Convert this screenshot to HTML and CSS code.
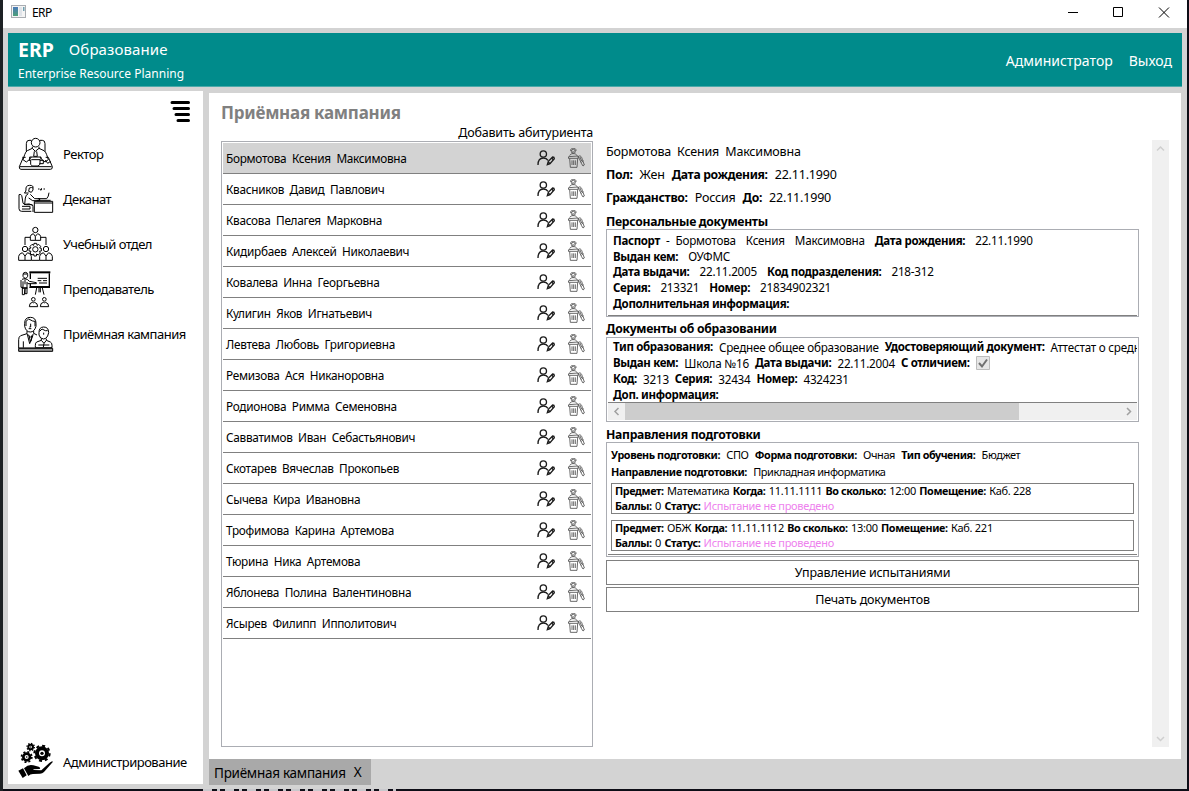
FILE: index.html
```html
<!DOCTYPE html>
<html lang="ru">
<head>
<meta charset="utf-8">
<title>ERP</title>
<link rel="stylesheet" href="styles.css">
</head>
<body>
<svg class="defs" aria-hidden="true">
  <symbol id="edit" viewBox="0 0 54 48">
    <g fill="none" stroke="#1c1c1c" stroke-width="4"><circle cx="19" cy="12" r="9.5"/><path d="M3 45C3 31 9 24 19 24c7 0 11 2 14 7"/><path d="M31 44l3-10 13-13q5 0 5 5L39 41z"/><path d="M34 36l5 5M44 24l5 5"/></g>
  </symbol>
  <symbol id="del" viewBox="0 0 51 60">
    <g fill="none" stroke="#444" stroke-width="2.4"><circle cx="16" cy="10" r="6"/><path d="M8 9C7 2 12 1 16 1s9 1 8 8M5 23c2-5 6-6 11-6s9 1 11 6M1 31l1-5 28-2 1 7zM5 32l2 26h20l2-26M12 37v14M17 37v14M22 37v14"/><path d="M31 25c7-4 10 2 12 9l6 17-4 3-5-8-6-14z"/><path d="M36 27l5 12M40 43l6-5M12 11l3 2 5-4"/></g>
  </symbol>
</svg>
<div class="desktop">
<div class="window">
  <div class="titlebar">
    <svg class="app-icon" width="15" height="13" viewBox="0 0 15 13"><defs><linearGradient id="g" x2="0" y2="1"><stop stop-color="#4a79b8"/><stop offset="1" stop-color="#4c9f78"/></linearGradient></defs><rect x=".5" y=".5" width="14" height="12" fill="#f4f4f4" stroke="#a9adb2"/><path d="M2 2h5v9H2z" fill="url(#g)"/><path d="M8 2h3v9H8z" fill="#dfe3e8"/><path d="M12 2h1.5v4H12z" fill="#6f9fb0"/></svg>
    <span class="app-title">ERP</span>
    <svg class="win-btns" width="110" height="24" viewBox="0 0 110 24" fill="none" stroke="#000"><path d="M5 12.500h10M50.500 7.500h9v9h-9zM96 7.500l10 10M106 7.500l-10 10"/></svg>
  </div>
  <div class="header">
    <div class="brand">
      <div class="brand-top"><b class="logo">ERP</b><span class="product">Образование</span></div>
      <div class="tagline">Enterprise Resource Planning</div>
    </div>
    <div class="user"><span>Администратор</span><span>Выход</span></div>
  </div>
  <div class="main">
    <div class="sidebar">
      <svg class="burger" width="20" height="23" viewBox="0 0 20 23" stroke="#000" stroke-width="3" stroke-linecap="round"><path d="M2 2.500h16.500M4 8.500h14.500M6 14.500h12.500M8 20.500h10.500"/></svg>
      <div class="nav">
        <div class="item"><svg class="ico" viewBox="0 0 108 108"><circle cx="53" cy="17" r="13"/><path d="M40 10h-7q-8 0-8 10v24M66 10h7q8 0 8 10v24"/><path d="M43 29v5l-15 7q-5 3-8 12l-5 15 10 7 9-7 6-8M63 29v5l15 7q5 3 8 12l5 15-10 7-9-7-6-8M43 34l9 9 11-9M49 43l-2 15h11l-2-15"/><path d="M40 68h26v14l-6 5H43l-5-5V68M66 70h10v10H64M35 60h34v8M35 60v12"/><path d="M16 61l-12 28q-1 8 5 8h88q7 0 6-8l-12-28M5 89h96M13 61h10M83 61h8M82 69l7 10 9-6"/></svg><span>Ректор</span></div>
        <div class="item"><svg class="ico" viewBox="0 0 108 108"><path d="M24 24q-2-14 11-14 12 0 10 8-4-3-11 0l-2 10 8 3 5-7v-6M24 24q-1 7-5 9h13M30 36q-6 1-8 12l-2 19M37 37l13 13h15v6H44l-12-8"/><path d="M3 38q8-3 9 7l3 18q1 5 10 5h16q4 0 4 6v16M3 38v42q0 8 8 8h29M20 67q15-4 24 3M12 73h24v8H12"/><path d="M49 58h55v33H49zM49 63h55M56 55h42M60 50h26q6-6 7-18M66 54l-4-3"/><path d="M61 21h3M69 21h3M77 21h3M67 22l3 3" stroke-width="4"/></svg><span>Деканат</span></div>
        <div class="item"><svg class="ico" viewBox="0 0 108 108"><circle cx="52" cy="9" r="8"/><path d="M37 40V29q0-6 9-9l6 8 7-8q9 3 9 9v11zM52 28v11M37 31H21v23M68 31h16v23"/><circle cx="21" cy="66" r="8"/><circle cx="84" cy="66" r="8"/><path d="M2 100V88q0-7 11-11l8 10 8-10q11 4 11 11v12zM65 100V88q0-7 11-11l8 10 8-10q11 4 11 11v12zM21 87v12M84 87v12M40 100h25"/><circle cx="52" cy="67" r="8"/><path d="M48 49h8l1 6 5-3 6 6-3 5 5 1v8l-6 1 3 5-6 6-5-3-1 6h-7l-1-6-5 3-6-6 3-5-6-1v-8l6-1-3-5 6-6 5 3z"/></svg><span>Учебный отдел</span></div>
        <div class="item"><svg class="ico" viewBox="0 0 108 108"><path d="M34 1h63" stroke-width="6"/><path d="M37 4v17M37 34v10h57V4M34 46h62" stroke-width="4"/><path d="M59 19h28M59 26h11M75 26h12M63 33h24"/><path d="M15 8q0-7 7-7t7 7v5q-3 6-7 6t-7-6zM15 6h13"/><path d="M12 22q9-5 17 1l5 5 21 4v3H30l-3-4v34h-6V49M21 49l-2 19h-6V46M9 24v22h6V28M21 22v15"/><path d="M12 48h16" stroke-width="5"/><path d="M56 48l-4 20M63 48v13M73 48l5 20M67 48v13"/><circle cx="46" cy="82" r="5.500"/><circle cx="79" cy="82" r="5.500"/><path d="M34 104q0-12 9-13 4 3 7 0 9 2 9 13zM67 104q0-12 9-13 4 3 7 0 9 2 9 13z"/></svg><span>Преподаватель</span></div>
        <div class="item"><svg class="ico" viewBox="0 0 108 108"><path d="M20 19Q20 1 37 1t17 18v9q-5 17-17 17-13 0-17-17zM24 27V13l8-7 12 6 7 1v15M38 20v10h-4M32 35h8"/><path d="M27 42v8L8 56q-6 3-6 12v25h50M47 42v7l10 5M27 50l11 11 9-11M33 56l4 17M42 56l-3 17M16 73v19M28 52l7 28 10-25"/><path d="M63 47q0-17 14-17 15 0 15 17l-3 10q-5 9-12 9-11 0-14-12zM65 43l7-7 10 5 7 0M77 47v6"/><path d="M70 65v5l-14 5q-4 2-4 10v7h50V85q0-8-5-10l-12-5v-5M70 70l8 9 7-9M78 79l-2 12M61 84h33"/><path d="M2 94h102v9H2z" fill="#999"/></svg><span>Приёмная кампания</span></div>
      </div>
      <div class="item bottom"><svg class="ico solid" viewBox="0 0 108 108"><g fill="none" stroke="#000"><circle cx="38" cy="9" r="7" stroke-width="6"/><circle cx="38" cy="9" r="11" stroke-width="4" stroke-dasharray="4 4.600"/><circle cx="26" cy="39" r="10" stroke-width="8"/><circle cx="26" cy="39" r="15.500" stroke-width="5" stroke-dasharray="6 6.200"/><circle cx="72" cy="28" r="15" stroke-width="12"/><circle cx="72" cy="28" r="23" stroke-width="6" stroke-dasharray="9 9"/></g><circle cx="38" cy="9" r="2"/><circle cx="26" cy="39" r="2.500"/><circle cx="72" cy="28" r="5"/><path d="M1 80l14-7 11 21-12 8zM18 73q14-14 28-9l16 4q7 3 3 7l-19 1 1 2 23 1 24-22q6-4 9-5 3 1-2 6L78 84q-5 5-12 5l-21 1q-9 0-14 6z"/></svg><span>Администрирование</span></div>
    </div>
    <div class="workspace">
      <div class="content">
        <div class="left">
          <h1 class="title">Приёмная кампания</h1>
          <div class="add">Добавить абитуриента</div>
          <div class="list">
            <div class="row selected"><span>Бормотова  Ксения  Максимовна</span><svg class="e"><use href="#edit"/></svg><svg class="d"><use href="#del"/></svg></div>
            <div class="row"><span>Квасников  Давид  Павлович</span><svg class="e"><use href="#edit"/></svg><svg class="d"><use href="#del"/></svg></div>
            <div class="row"><span>Квасова  Пелагея  Марковна</span><svg class="e"><use href="#edit"/></svg><svg class="d"><use href="#del"/></svg></div>
            <div class="row"><span>Кидирбаев  Алексей  Николаевич</span><svg class="e"><use href="#edit"/></svg><svg class="d"><use href="#del"/></svg></div>
            <div class="row"><span>Ковалева  Инна  Георгьевна</span><svg class="e"><use href="#edit"/></svg><svg class="d"><use href="#del"/></svg></div>
            <div class="row"><span>Кулигин  Яков  Игнатьевич</span><svg class="e"><use href="#edit"/></svg><svg class="d"><use href="#del"/></svg></div>
            <div class="row"><span>Левтева  Любовь  Григориевна</span><svg class="e"><use href="#edit"/></svg><svg class="d"><use href="#del"/></svg></div>
            <div class="row"><span>Ремизова  Ася  Никаноровна</span><svg class="e"><use href="#edit"/></svg><svg class="d"><use href="#del"/></svg></div>
            <div class="row"><span>Родионова  Римма  Семеновна</span><svg class="e"><use href="#edit"/></svg><svg class="d"><use href="#del"/></svg></div>
            <div class="row"><span>Савватимов  Иван  Себастьянович</span><svg class="e"><use href="#edit"/></svg><svg class="d"><use href="#del"/></svg></div>
            <div class="row"><span>Скотарев  Вячеслав  Прокопьев</span><svg class="e"><use href="#edit"/></svg><svg class="d"><use href="#del"/></svg></div>
            <div class="row"><span>Сычева  Кира  Ивановна</span><svg class="e"><use href="#edit"/></svg><svg class="d"><use href="#del"/></svg></div>
            <div class="row"><span>Трофимова  Карина  Артемова</span><svg class="e"><use href="#edit"/></svg><svg class="d"><use href="#del"/></svg></div>
            <div class="row"><span>Тюрина  Ника  Артемова</span><svg class="e"><use href="#edit"/></svg><svg class="d"><use href="#del"/></svg></div>
            <div class="row"><span>Яблонева  Полина  Валентиновна</span><svg class="e"><use href="#edit"/></svg><svg class="d"><use href="#del"/></svg></div>
            <div class="row"><span>Ясырев  Филипп  Ипполитович</span><svg class="e"><use href="#edit"/></svg><svg class="d"><use href="#del"/></svg></div>
          </div>
        </div>
        <div class="details">
          <div class="line info"><span>Бормотова  Ксения  Максимовна</span></div>
          <div class="line info"><b>Пол:</b><span>Жен</span><b>Дата рождения:</b><span>22.11.1990</span></div>
          <div class="line info"><b>Гражданство:</b><span>Россия</span><b>До:</b><span>22.11.1990</span></div>
          <h2 class="sub first">Персональные документы</h2>
          <div class="box passport">
            <div class="line"><b>Паспорт</b><span class="dash">-</span><span>Бормотова</span><span>Ксения</span><span>Максимовна</span><b>Дата рождения:</b><span>22.11.1990</span></div>
            <div class="line"><b>Выдан кем:</b><span>ОУФМС</span></div>
            <div class="line"><b>Дата выдачи:</b><span>22.11.2005</span><b>Код подразделения:</b><span>218-312</span></div>
            <div class="line"><b>Серия:</b><span>213321</span><b>Номер:</b><span>21834902321</span></div>
            <div class="line"><b>Дополнительная информация:</b></div>
          </div>
          <h2 class="sub">Документы об образовании</h2>
          <div class="box edu">
            <div class="lines">
              <div class="line"><b>Тип образования:</b><span>Среднее общее образование</span><b>Удостоверяющий документ:</b><span>Аттестат о средн</span></div>
              <div class="line"><b>Выдан кем:</b><span>Школа №16</span><b>Дата выдачи:</b><span>22.11.2004</span><b>С отличием:</b><svg class="check" width="14" height="14" viewBox="0 0 14 14"><path d="M.5.5h13v13H.5z" fill="#e6e6e6" stroke="#bcbcbc"/><path d="M3 7l3 3.500L11 3.500" fill="none" stroke="#707070" stroke-width="2"/></svg></div>
              <div class="line"><b>Код:</b><span>3213</span><b>Серия:</b><span>32434</span><b>Номер:</b><span>4324231</span></div>
              <div class="line"><b>Доп. информация:</b></div>
            </div>
            <div class="hscroll"><svg width="17" height="17" viewBox="0 0 17 17"><path d="M10.500 5L7 8.500l3.500 3.500"/></svg><div class="thumb"></div><svg width="17" height="17" viewBox="0 0 17 17"><path d="M7 5l3.500 3.500L7 12"/></svg></div>
          </div>
          <h2 class="sub last">Направления подготовки</h2>
          <div class="box prog">
            <div class="line"><b>Уровень подготовки:</b><span>СПО</span><b>Форма подготовки:</b><span>Очная</span><b>Тип обучения:</b><span>Бюджет</span></div>
            <div class="line"><b>Направление подготовки:</b><span>Прикладная информатика</span></div>
            <div class="exam">
              <div class="line"><b>Предмет:</b><span>Математика</span><b>Когда:</b><span>11.11.1111</span><b>Во сколько:</b><span>12:00</span><b>Помещение:</b><span>Каб. 228</span></div>
              <div class="line"><b>Баллы:</b><span>0</span><b>Статус:</b><span class="pending">Испытание не проведено</span></div>
            </div>
            <div class="exam">
              <div class="line"><b>Предмет:</b><span>ОБЖ</span><b>Когда:</b><span>11.11.1112</span><b>Во сколько:</b><span>13:00</span><b>Помещение:</b><span>Каб. 221</span></div>
              <div class="line"><b>Баллы:</b><span>0</span><b>Статус:</b><span class="pending">Испытание не проведено</span></div>
            </div>
            <div class="prog-end"></div>
          </div>
          <div class="btn">Управление испытаниями</div>
          <div class="btn">Печать документов</div>
        </div>
        <div class="vscroll"><svg width="17" height="17" viewBox="0 0 17 17"><path d="M5 10.500L8.500 7l3.500 3.500"/></svg><svg width="17" height="17" viewBox="0 0 17 17"><path d="M5 7l3.500 3.500L12 7"/></svg></div>
      </div>
      <div class="tabs"><div class="tab"><span>Приёмная кампания</span><span class="close">X</span></div></div>
    </div>
  </div>
</div>
<div class="behind"></div>
</div>
</body>
</html>
```
FILE: styles.css
```css
* { box-sizing: border-box; }
body { margin: 0; font-family: "Noto Sans", "Open Sans", sans-serif; font-size: 12px; color: #000; }
.defs { position: absolute; width: 0; height: 0; }
.desktop { width: 1189px; height: 791px; padding: 0 2px 0 3px; background: linear-gradient(90deg, #1d2124 3px, #0d0d16 3px); overflow: hidden; }
.behind { width: 195px; height: 2px; margin-left: 200px; background: repeating-linear-gradient(90deg, #c8c8cc 0 9px, #0d0d16 9px 14px, #c8c8cc 14px 17px, #0d0d16 17px 22px); }
.window { height: 789px; background: #d3d3d3; display: flex; flex-direction: column; }
.titlebar { height: 28px; background: #fff; display: flex; align-items: flex-start; flex: none; padding-left: 8px; }
.app-icon { margin-top: 5px; }
.app-title { margin-left: 6px; line-height: 25px; font-size: 12px; letter-spacing: -.6px; }
.win-btns { margin-left: auto; margin-right: 14px; }
.header { height: 54px; margin: 5px 5px 0; background: #008b8b; border-bottom: 1px solid #4ba9a9; color: #fff; display: flex; justify-content: space-between; padding: 0 10px; flex: none; }
.brand-top { display: flex; align-items: center; height: 33px; gap: 15px; }
.logo { font-size: 19.5px; line-height: 33px; }
.product { font-size: 15px; line-height: 33px; height: 33px; letter-spacing: .1px; }
.tagline { line-height: 15px; font-size: 12px; }
.user { display: flex; gap: 16px; align-items: center; font-size: 14px; padding-top: 2px; }
.main { flex: 1; display: flex; gap: 6px; padding: 4px 6px 0 5px; min-height: 0; }
.sidebar { width: 195px; height: 693px; background: #fff; display: flex; flex-direction: column; }
.burger { align-self: flex-end; margin: 9px 13px 0 0; flex: none; }
.nav { padding-top: 9px; }
.item { height: 45px; padding-left: 10px; display: flex; align-items: center; gap: 9px; font-size: 13px; letter-spacing: -.5px; }
.nav .item span { margin-top: -2px; }
.item.bottom { margin-top: auto; }
.ico { width: 36px; height: 36px; fill: none; stroke: #000; stroke-width: 3; overflow: visible; flex: none; }
.ico.solid { fill: #000; stroke: none; margin-top: 1px; }
.workspace { flex: 1; padding-top: 2px; min-width: 0; }
.content { height: 666px; background: #fff; display: flex; padding-left: 12px; }
.left { width: 372px; }
.title { margin: 0; height: 31px; padding-top: 8px; line-height: 24px; font-size: 17px; letter-spacing: -.25px; color: #808080; white-space: nowrap; }
.add { height: 17px; line-height: 17px; text-align: right; font-size: 12.5px; letter-spacing: -.2px; }
.list { height: 606px; border: 1px solid #abadb3; padding: 1px; }
.row { height: 31px; border-bottom: 1px solid #808080; display: flex; align-items: center; padding: 0 6px 0 3px; white-space: pre; font-size: 11.8px; letter-spacing: -.29px; }
.row span { flex: 1; }
.row.selected { background: #d3d3d3; }
.e { width: 18px; height: 16px; margin-right: 13px; }
.d { width: 17px; height: 20px; }
.details { width: 533px; margin-left: 13px; padding-top: 47px; }
.line { display: flex; white-space: pre; font-size: 11.7px; letter-spacing: -.23px; }
.line b { font-size: 11.5px; letter-spacing: -.33px; }
.info { height: 23px; line-height: 23px; gap: 7px; font-size: 12.5px; letter-spacing: -.19px; }
.info b { font-size: 12.2px; letter-spacing: -.33px; }
.sub { margin: 0; height: 20px; line-height: 24px; font-size: 12.2px; letter-spacing: -.3px; }
.sub.first { line-height: 25px; }
.sub.last { line-height: 25px; }
.box { border: 1px solid #abadb3; padding: 1px; }
.passport { height: 88px; padding: 3px 1px 1px 6px; }
.passport .line { height: 15.7px; line-height: 15.7px; gap: 10px; }
.passport .line:last-child { height: 20px; margin: 0 0 0 -5px; padding-left: 5px; border-bottom: 1px solid #808080; }
.passport .dash { margin: 0 -4px 0 -4px; }
.edu { height: 85px; overflow: hidden; }
.lines { height: 64px; padding: 0 0 0 5px; border-bottom: 1px solid #808080; overflow: hidden; }
.edu .line { height: 16px; line-height: 16px; gap: 6px; align-items: center; }
.hscroll { display: flex; background: #f0f0f0; height: 17px; }
.hscroll svg, .vscroll svg { fill: none; stroke: #a0a0a0; stroke-width: 1.5; flex: none; }
.hscroll svg:last-child { margin-left: auto; }
.thumb { width: 394px; background: #cdcdcd; }
.prog { height: 115px; padding: 3px 4px 0; font-size: 11px; }
.prog .line { font-size: 11px; }
.prog .line b { font-size: 10.8px; }
.prog > .line { height: 17px; line-height: 17px; gap: 6.3px; letter-spacing: -.43px; }
.prog > .line b { letter-spacing: -.42px; }
.exam { height: 31px; border: 1px solid #808080; margin: 3px 0 6px; padding-left: 3px; }
.exam + .exam { margin-bottom: 3px; }
.prog-end { height: 1px; background: #808080; margin: 0 -3px; }
.exam .line { height: 14.8px; line-height: 14.8px; gap: 3.3px; letter-spacing: -.27px; }
.exam .line b { letter-spacing: -.4px; }
.pending { color: #ee82ee; }
.btn { height: 25px; border: 1px solid #808080; margin-top: 3px; text-align: center; line-height: 23px; font-size: 12.5px; letter-spacing: -.22px; }
.btn + .btn { margin-top: 2px; }
.vscroll { width: 17px; height: 607px; margin: 47px 0 0 13px; background: #f0f0f0; display: flex; flex-direction: column; justify-content: space-between; }
.vscroll svg { stroke: #cfcfcf; }
.tab { width: 162px; height: 26px; background: #a9a9a9; padding: 0 5px; display: flex; gap: 8px; line-height: 29px; font-size: 13.5px; letter-spacing: -.27px; white-space: nowrap; }
.close { line-height: 27px; }
```
